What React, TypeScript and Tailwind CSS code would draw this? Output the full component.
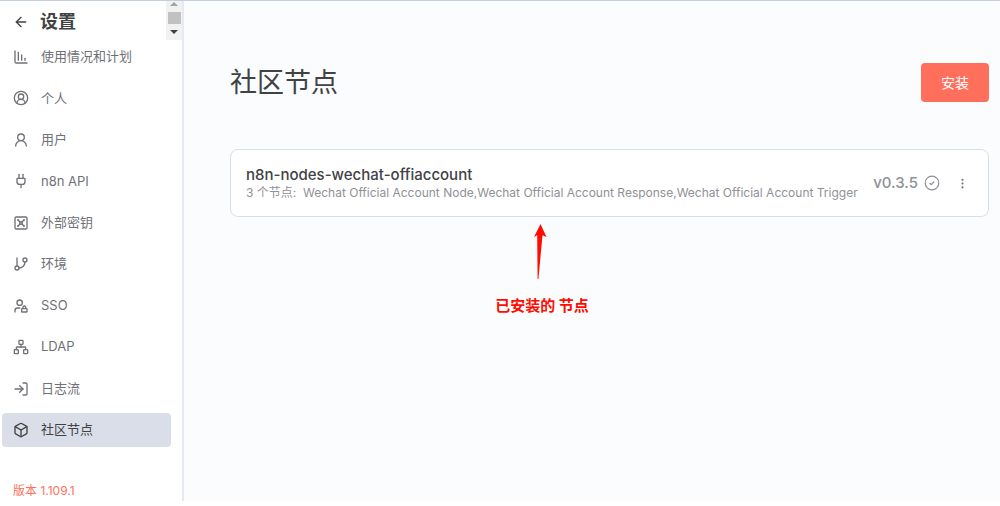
import {
  ArrowLeft,
  Box,
  ChartColumnDecreasing,
  CircleUserRound,
  EllipsisVertical,
  GitBranch,
  LogIn,
  Network,
  Plug,
  UserLock,
  UserRound,
  Vault,
  type LucideIcon,
} from 'lucide-react'
import { useState } from 'react'

const items: { id: string; label: string; icon: LucideIcon }[] = [
  { id: 'usage', label: '使用情况和计划', icon: ChartColumnDecreasing },
  { id: 'personal', label: '个人', icon: CircleUserRound },
  { id: 'users', label: '用户', icon: UserRound },
  { id: 'api', label: 'n8n API', icon: Plug },
  { id: 'secrets', label: '外部密钥', icon: Vault },
  { id: 'environments', label: '环境', icon: GitBranch },
  { id: 'sso', label: 'SSO', icon: UserLock },
  { id: 'ldap', label: 'LDAP', icon: Network },
  { id: 'log-streaming', label: '日志流', icon: LogIn },
  { id: 'community-nodes', label: '社区节点', icon: Box },
]

const nodes = [
  'Wechat Official Account Node',
  'Wechat Official Account Response',
  'Wechat Official Account Trigger',
]

function ScrollStub() {
  return (
    <div className="flex w-4 shrink-0 flex-col items-center justify-between bg-[#f1f1f1] pt-px pb-1.5" aria-hidden="true">
      <svg width="8" height="4" viewBox="0 0 8 4">
        <path d="M4 0 8 4H0z" fill="#a3a3a3" />
      </svg>
      <div className="h-3 w-[13px] bg-[#c1c1c1]" />
      <svg width="8" height="4" viewBox="0 0 8 4">
        <path d="M0 0h8L4 4z" fill="#404040" />
      </svg>
    </div>
  )
}

function Sidebar() {
  const [active, setActive] = useState('community-nodes')

  return (
    <aside className="flex w-[184px] shrink-0 flex-col border-r-2 border-[#e6e9f2] bg-white">
      <div className="flex h-[39px] justify-between">
        <div className="flex items-center gap-[11px] pt-0.5 pl-[13px]">
          <button type="button" aria-label="返回" className="text-[#414244]">
            <ArrowLeft size={16} />
          </button>
          <h2 className="text-[18px] leading-6 font-bold text-[#414244]">设置</h2>
        </div>
        <ScrollStub />
      </div>

      <nav className="flex flex-1 flex-col justify-between pr-[11px] pl-0.5">
        {items.map(({ id, label, icon: Icon }) => (
          <a
            key={id}
            href={`#${id}`}
            onClick={() => setActive(id)}
            className={
              id === active
                ? 'flex h-[34px] items-center gap-3 rounded bg-[#dadee9] pl-[11px] text-[13px] text-[#414244]'
                : 'flex h-[34px] items-center gap-3 rounded pl-[11px] text-[13px] text-[#6f7177]'
            }
          >
            <Icon size={16} className="shrink-0" />
            <span>{label}</span>
          </a>
        ))}
      </nav>

      <div className="flex h-[54px] items-end pb-px pl-[13px]">
        <a href="#version" className="text-[12px] leading-[18px] text-[#ff6f5c]">
          版本 1.109.1
        </a>
      </div>
    </aside>
  )
}

// Hand-drawn style pointer with its caption
function Annotation() {
  return (
    <div className="absolute top-full left-[264px] flex w-24 flex-col items-center pt-[7px] text-[#ff0c00]">
      <svg width="14" height="56" viewBox="0 0 14 56" fill="currentColor" className="mr-1">
        <path d="M7.5 0 13.5 13 9.5 11.3 5.4 55H4.6L4.2 11.3 1 13z" />
      </svg>
      <span className="mt-4 text-[15px] leading-5 font-bold whitespace-nowrap">已安装的 节点</span>
    </div>
  )
}

function PackageCard() {
  return (
    <div className="relative">
      <div className="flex h-[68px] items-center justify-between rounded-lg border border-[#dadee9] bg-white pr-[19px] pl-[15px]">
        <div>
          <h3 className="text-[15px] leading-5 font-medium text-[#414244]">n8n-nodes-wechat-offiaccount</h3>
          <p className="text-[12px] leading-4 text-[#8f9197]">
            3 个节点:&nbsp; {nodes.join(',')}
          </p>
        </div>
        <div className="flex items-center">
          <span className="text-[15px] font-medium text-[#8f9197]">v0.3.5</span>
          <svg width="16" height="16" viewBox="0 0 16 16" fill="none" stroke="#8f9197" className="ml-1.5" aria-hidden="true">
            <circle cx="8" cy="8" r="6.8" strokeWidth="1.2" />
            <path d="m5.6 8 1.6 1.6 3-3" strokeWidth="1.3" />
          </svg>
          <button type="button" aria-label="操作" className="ml-4 text-[#6f7177]">
            <EllipsisVertical size={13} />
          </button>
        </div>
      </div>
      <Annotation />
    </div>
  )
}

export default function App() {
  return (
    <div className="flex min-h-screen border-t border-[#c5cde0] bg-white pb-[5px] font-['Inter','Noto_Sans_CJK_SC',sans-serif]">
      <Sidebar />
      <main className="min-w-0 flex-1 bg-[#fbfcfe] pt-[62px] pr-[11px] pl-[46px]">
        <div className="mb-[47px] flex items-center justify-between">
          <h1 className="text-[27px] leading-9 text-[#414244]">社区节点</h1>
          <button type="button" className="h-[39px] rounded bg-[#ff6f5c] px-5 text-[14px] text-white">
            安装
          </button>
        </div>
        <PackageCard />
      </main>
    </div>
  )
}
